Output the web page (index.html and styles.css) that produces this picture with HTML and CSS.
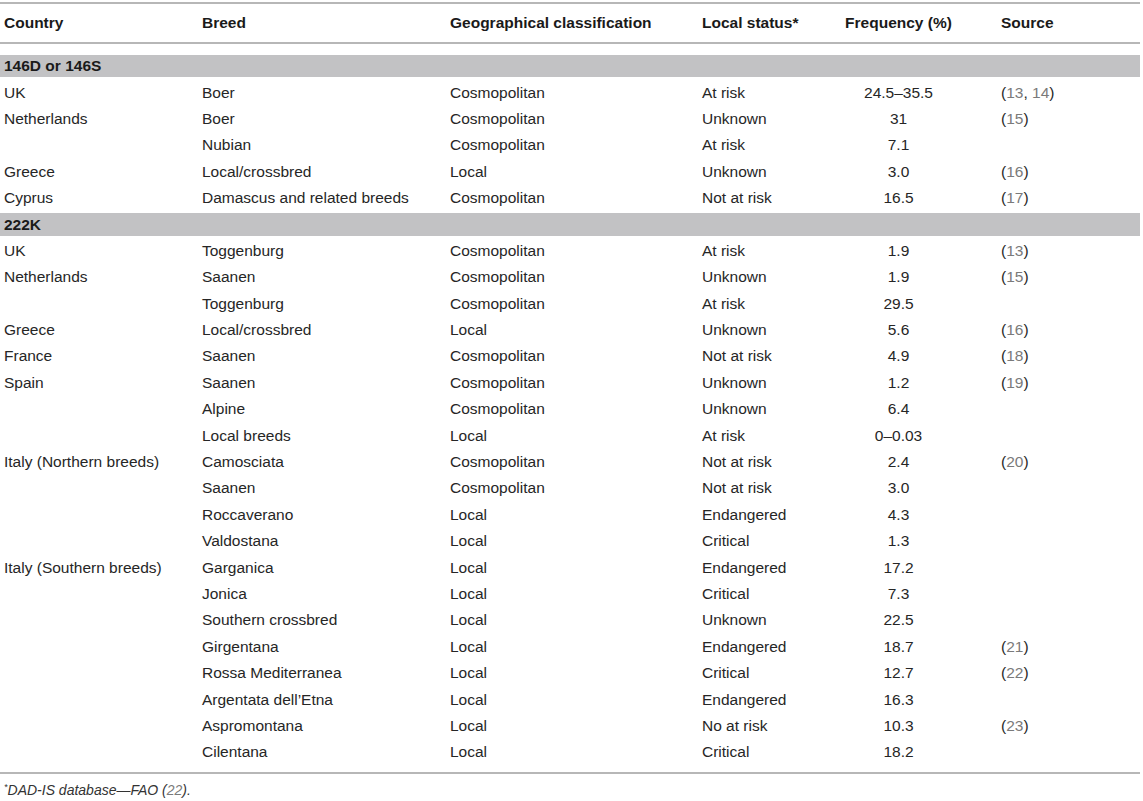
FILE: index.html
```html
<!DOCTYPE html>
<html lang="en">
<head>
<meta charset="utf-8">
<title>Table</title>
<link rel="stylesheet" href="styles.css">
</head>
<body>
<div class="wrap">
  <div class="table">
    <div class="row head">
      <div class="cell">Country</div><div class="cell">Breed</div><div class="cell">Geographical classification</div><div class="cell">Local status*</div><div class="cell num">Frequency (%)</div><div class="cell">Source</div>
    </div>
    <div class="body">
      <div class="group"><div class="bar">146D or 146S</div></div>
      <div class="row"><div class="cell">UK</div><div class="cell">Boer</div><div class="cell">Cosmopolitan</div><div class="cell">At risk</div><div class="cell num">24.5–35.5</div><div class="cell">(<span class="ref">13</span>, <span class="ref">14</span>)</div></div>
      <div class="row"><div class="cell">Netherlands</div><div class="cell">Boer</div><div class="cell">Cosmopolitan</div><div class="cell">Unknown</div><div class="cell num">31</div><div class="cell">(<span class="ref">15</span>)</div></div>
      <div class="row"><div class="cell"></div><div class="cell">Nubian</div><div class="cell">Cosmopolitan</div><div class="cell">At risk</div><div class="cell num">7.1</div><div class="cell"></div></div>
      <div class="row"><div class="cell">Greece</div><div class="cell">Local/crossbred</div><div class="cell">Local</div><div class="cell">Unknown</div><div class="cell num">3.0</div><div class="cell">(<span class="ref">16</span>)</div></div>
      <div class="row"><div class="cell">Cyprus</div><div class="cell">Damascus and related breeds</div><div class="cell">Cosmopolitan</div><div class="cell">Not at risk</div><div class="cell num">16.5</div><div class="cell">(<span class="ref">17</span>)</div></div>
      <div class="group"><div class="bar">222K</div></div>
      <div class="row"><div class="cell">UK</div><div class="cell">Toggenburg</div><div class="cell">Cosmopolitan</div><div class="cell">At risk</div><div class="cell num">1.9</div><div class="cell">(<span class="ref">13</span>)</div></div>
      <div class="row"><div class="cell">Netherlands</div><div class="cell">Saanen</div><div class="cell">Cosmopolitan</div><div class="cell">Unknown</div><div class="cell num">1.9</div><div class="cell">(<span class="ref">15</span>)</div></div>
      <div class="row"><div class="cell"></div><div class="cell">Toggenburg</div><div class="cell">Cosmopolitan</div><div class="cell">At risk</div><div class="cell num">29.5</div><div class="cell"></div></div>
      <div class="row"><div class="cell">Greece</div><div class="cell">Local/crossbred</div><div class="cell">Local</div><div class="cell">Unknown</div><div class="cell num">5.6</div><div class="cell">(<span class="ref">16</span>)</div></div>
      <div class="row"><div class="cell">France</div><div class="cell">Saanen</div><div class="cell">Cosmopolitan</div><div class="cell">Not at risk</div><div class="cell num">4.9</div><div class="cell">(<span class="ref">18</span>)</div></div>
      <div class="row"><div class="cell">Spain</div><div class="cell">Saanen</div><div class="cell">Cosmopolitan</div><div class="cell">Unknown</div><div class="cell num">1.2</div><div class="cell">(<span class="ref">19</span>)</div></div>
      <div class="row"><div class="cell"></div><div class="cell">Alpine</div><div class="cell">Cosmopolitan</div><div class="cell">Unknown</div><div class="cell num">6.4</div><div class="cell"></div></div>
      <div class="row"><div class="cell"></div><div class="cell">Local breeds</div><div class="cell">Local</div><div class="cell">At risk</div><div class="cell num">0–0.03</div><div class="cell"></div></div>
      <div class="row"><div class="cell">Italy (Northern breeds)</div><div class="cell">Camosciata</div><div class="cell">Cosmopolitan</div><div class="cell">Not at risk</div><div class="cell num">2.4</div><div class="cell">(<span class="ref">20</span>)</div></div>
      <div class="row"><div class="cell"></div><div class="cell">Saanen</div><div class="cell">Cosmopolitan</div><div class="cell">Not at risk</div><div class="cell num">3.0</div><div class="cell"></div></div>
      <div class="row"><div class="cell"></div><div class="cell">Roccaverano</div><div class="cell">Local</div><div class="cell">Endangered</div><div class="cell num">4.3</div><div class="cell"></div></div>
      <div class="row"><div class="cell"></div><div class="cell">Valdostana</div><div class="cell">Local</div><div class="cell">Critical</div><div class="cell num">1.3</div><div class="cell"></div></div>
      <div class="row"><div class="cell">Italy (Southern breeds)</div><div class="cell">Garganica</div><div class="cell">Local</div><div class="cell">Endangered</div><div class="cell num">17.2</div><div class="cell"></div></div>
      <div class="row"><div class="cell"></div><div class="cell">Jonica</div><div class="cell">Local</div><div class="cell">Critical</div><div class="cell num">7.3</div><div class="cell"></div></div>
      <div class="row"><div class="cell"></div><div class="cell">Southern crossbred</div><div class="cell">Local</div><div class="cell">Unknown</div><div class="cell num">22.5</div><div class="cell"></div></div>
      <div class="row"><div class="cell"></div><div class="cell">Girgentana</div><div class="cell">Local</div><div class="cell">Endangered</div><div class="cell num">18.7</div><div class="cell">(<span class="ref">21</span>)</div></div>
      <div class="row"><div class="cell"></div><div class="cell">Rossa Mediterranea</div><div class="cell">Local</div><div class="cell">Critical</div><div class="cell num">12.7</div><div class="cell">(<span class="ref">22</span>)</div></div>
      <div class="row"><div class="cell"></div><div class="cell">Argentata dell’Etna</div><div class="cell">Local</div><div class="cell">Endangered</div><div class="cell num">16.3</div><div class="cell"></div></div>
      <div class="row"><div class="cell"></div><div class="cell">Aspromontana</div><div class="cell">Local</div><div class="cell">No at risk</div><div class="cell num">10.3</div><div class="cell">(<span class="ref">23</span>)</div></div>
      <div class="row"><div class="cell"></div><div class="cell">Cilentana</div><div class="cell">Local</div><div class="cell">Critical</div><div class="cell num">18.2</div><div class="cell"></div></div>
    </div>
  </div>
  <p class="foot"><sup>*</sup>DAD-IS database—FAO (<span class="ref">22</span>).</p>
</div>
</body>
</html>
```

FILE: styles.css
```css
html, body {
  margin: 0;
  padding: 0;
  background: #ffffff;
}

body {
  font-family: "Liberation Sans", Arial, Helvetica, sans-serif;
  font-size: 15.5px;
  color: #262626;
}

.wrap {
  width: 1140px;
  padding-top: 2px;
}

.table {
  border-top: 2px solid #b7b7b7;
  border-bottom: 2px solid #b7b7b7;
}

.row {
  display: grid;
  grid-template-columns: 198px 248px 252px 102px 197px 143px;
  align-items: center;
  height: 26.4px;
  line-height: 18px;
}

.row.head {
  height: 38px;
  border-bottom: 2px solid #b7b7b7;
  font-weight: bold;
  color: #1a1a1a;
}

.cell {
  padding-left: 4px;
  white-space: nowrap;
}

.cell.num {
  padding-left: 0;
  text-align: center;
}

.body {
  padding: 9px 0 6px 0;
}

.group {
  height: 26.4px;
  padding: 2px 0;
  box-sizing: border-box;
}

.bar {
  height: 100%;
  display: flex;
  align-items: center;
  padding-left: 4px;
  background: #c2c2c4;
  font-weight: bold;
  color: #1a1a1a;
}

.ref {
  color: #7a7a7a;
}

.foot {
  margin: 7px 0 0 0;
  padding-left: 4px;
  font-size: 14px;
  line-height: 18px;
  font-style: italic;
  color: #333333;
}

.foot sup {
  font-size: 9px;
  vertical-align: 5px;
  line-height: 0;
}
```
